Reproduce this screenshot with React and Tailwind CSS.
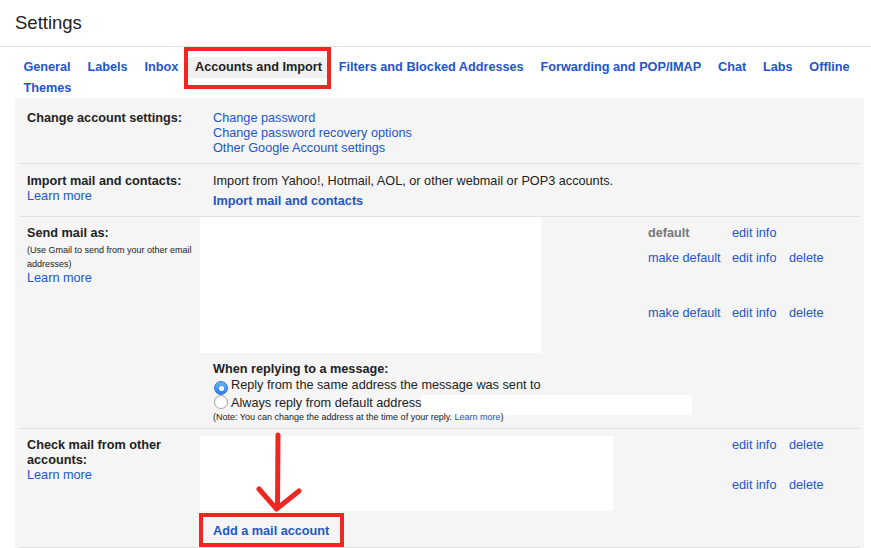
import React from "react";

const tabs = [
  "General",
  "Labels",
  "Inbox",
  "Accounts and Import",
  "Filters and Blocked Addresses",
  "Forwarding and POP/IMAP",
  "Chat",
  "Labs",
  "Offline",
  "Themes",
];

function Link({ children, className = "" }) {
  return <span className={`text-[#2255cc] cursor-pointer ${className}`}>{children}</span>;
}

function Radio({ checked }) {
  if (checked) {
    return (
      <span className="inline-flex items-center justify-center w-[14px] h-[14px] rounded-full bg-gradient-to-b from-[#6cb3fa] to-[#2a7ee8] border border-[#2f78d8] align-[-2px] ml-px mr-[3px]">
        <span className="w-[5px] h-[5px] rounded-full bg-white" />
      </span>
    );
  }
  return (
    <span className="inline-block w-[14px] h-[14px] rounded-full bg-white border border-[#a3a3a3] shadow-[inset_0_1px_1px_rgba(0,0,0,0.08)] align-[-2px] ml-px mr-[3px]" />
  );
}

function Row({ label, children, className = "" }) {
  return (
    <div className={`flex border-b border-[#e1e1e1] ${className}`}>
      <div className="w-[194px] shrink-0 pl-2">{label}</div>
      <div className="flex-1 relative">{children}</div>
    </div>
  );
}

export default function App() {
  return (
    <div className="w-[871px] h-[548px] overflow-hidden bg-white text-[#222] text-[12.7px] leading-[15px] font-['Liberation_Sans',Arial,sans-serif]">
      {/* TITLE */}
      <div className="h-[47px] pl-[15px] flex items-center border-b border-[#e3e3e3]">
        <h1 className="text-[18.5px] leading-none">Settings</h1>
      </div>

      {/* TABS */}
      <div className="pl-[15px] pr-[5px] pt-[9.5px] flex flex-wrap font-bold leading-[21px]">
        {tabs.map((t) =>
          t === "Accounts and Import" ? (
            <div key={t} className="relative px-[8.4px] bg-[#f1f1f1] text-[#222]">
              {t}
              <span className="absolute -left-[3px] -right-[1px] -top-[9.5px] -bottom-[11.5px] border-4 border-[#ee2722]" />
            </div>
          ) : (
            <div key={t} className="px-[8.4px] text-[#2255cc]">
              {t}
            </div>
          )
        )}
      </div>

      {/* PANEL */}
      <div className="ml-[15px] -mt-[0.5px] w-[849px] h-[460px] bg-[#f5f5f5] pt-[3px] px-1">
        {/* CHANGE ACCOUNT */}
        <Row
          className="pt-[9.5px] pb-[7.5px]"
          label={<div className="font-bold">Change account settings:</div>}
        >
          <div className="flex flex-col items-start">
            <Link>Change password</Link>
            <Link>Change password recovery options</Link>
            <Link>Other Google Account settings</Link>
          </div>
        </Row>

        {/* IMPORT */}
        <Row
          className="pt-[9.5px] pb-[7.5px]"
          label={
            <div className="flex flex-col items-start">
              <span className="font-bold">Import mail and contacts:</span>
              <Link>Learn more</Link>
            </div>
          }
        >
          <div>Import from Yahoo!, Hotmail, AOL, or other webmail or POP3 accounts.</div>
          <div className="mt-[5px]">
            <Link className="font-bold">Import mail and contacts</Link>
          </div>
        </Row>

        {/* SEND MAIL AS */}
        <Row
          label={
            <div className="pt-[8.5px] flex flex-col items-start">
              <span className="font-bold">Send mail as:</span>
              <span className="mt-[2.5px] text-[9px] leading-[14px]">
                (Use Gmail to send from your other email addresses)
              </span>
              <Link>Learn more</Link>
            </div>
          }
        >
          <div className="flex">
            <div className="-ml-[13px] w-[341px] h-[136px] bg-white shrink-0" />
            <div className="ml-[107px] pt-[8.5px]">
              <div className="flex">
                <span className="w-[84px] font-bold text-[#777]">default</span>
                <Link className="w-[57px]">edit info</Link>
              </div>
              <div className="flex mt-[10px]">
                <Link className="w-[84px]">make default</Link>
                <Link className="w-[57px]">edit info</Link>
                <Link>delete</Link>
              </div>
              <div className="flex mt-[40px]">
                <Link className="w-[84px]">make default</Link>
                <Link className="w-[57px]">edit info</Link>
                <Link>delete</Link>
              </div>
            </div>
          </div>
          <div className="mt-[8.5px] font-bold">When replying to a message:</div>
          <div className="leading-[17px]">
            <div>
              <Radio checked />
              Reply from the same address the message was sent to
            </div>
            <div>
              <Radio />
              Always reply from default address
              <span className="inline-block align-top w-[271px] h-[20px] -mb-[3px] bg-white" />
            </div>
          </div>
          <div className="relative text-[9px] leading-[10px] pb-[6px]">
            (Note: You can change the address at the time of your reply. <Link>Learn more</Link>)
          </div>
        </Row>

        {/* CHECK MAIL */}
        <Row
          label={
            <div className="pt-[8.5px] pr-4 flex flex-col items-start">
              <span className="font-bold">Check mail from other accounts:</span>
              <Link>Learn more</Link>
            </div>
          }
        >
          <div className="flex">
            <div className="-ml-[13px] mt-[7px] w-[413px] h-[75px] bg-white shrink-0" />
            <div className="ml-[119px] pt-[8.5px]">
              <div className="flex">
                <Link className="w-[57px]">edit info</Link>
                <Link>delete</Link>
              </div>
              <div className="flex mt-[25px]">
                <Link className="w-[57px]">edit info</Link>
                <Link>delete</Link>
              </div>
            </div>
          </div>
          <div className="mt-[12.5px] pb-[8.5px]">
            <span className="relative inline-block">
              <Link className="font-bold">Add a mail account</Link>
              <span className="absolute -left-[14px] -right-[15px] -top-[10.5px] -bottom-[8.5px] border-4 border-[#ee2722]" />
            </span>
          </div>

          {/* ARROW */}
          <svg
            className="absolute left-[42px] top-[3px]"
            width="48"
            height="82"
            viewBox="0 0 48 82"
            fill="none"
            stroke="#ee2722"
            strokeWidth="5"
            strokeLinecap="round"
            strokeLinejoin="round"
          >
            <path d="M23 3 L22.5 76" />
            <path d="M4 57 L21.5 77 L44 59" />
          </svg>
        </Row>
      </div>
    </div>
  );
}
